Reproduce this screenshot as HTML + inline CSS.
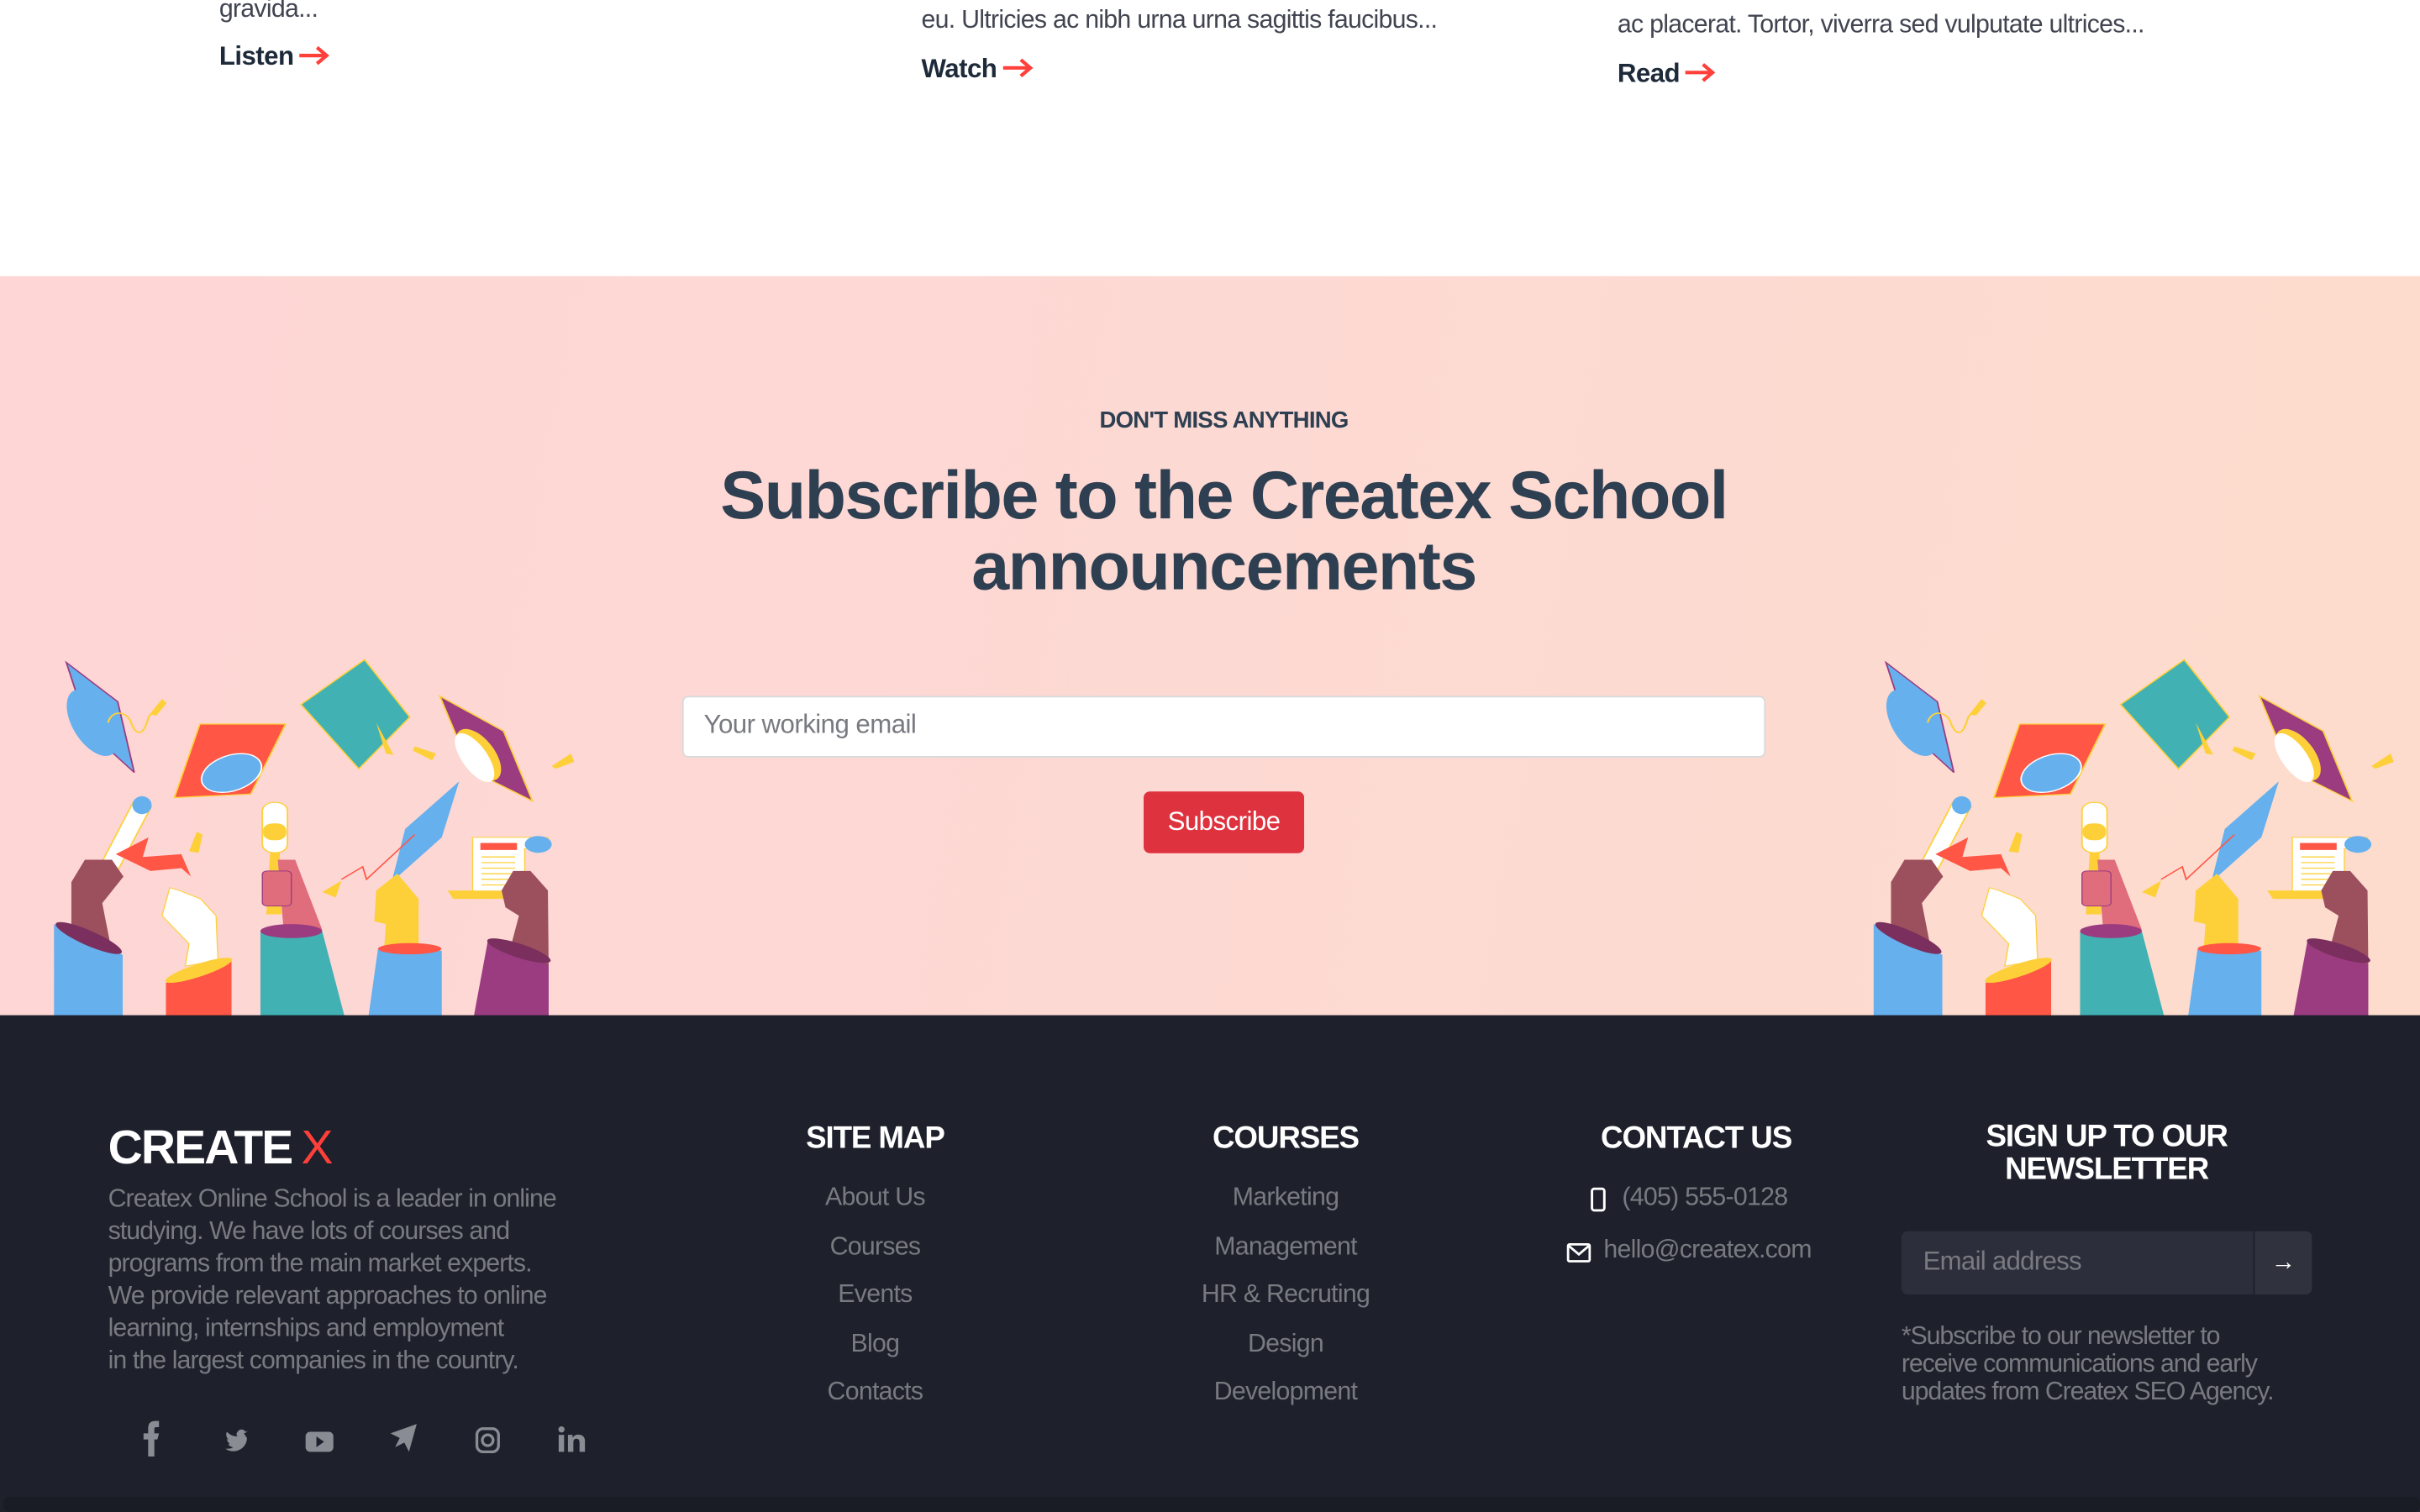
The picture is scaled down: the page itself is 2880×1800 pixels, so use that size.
<!DOCTYPE html>
<html><head><meta charset="utf-8">
<style>
html,body{margin:0;padding:0;width:2880px;height:1800px;overflow:hidden;background:#fff}
#w{position:absolute;left:0;top:0;width:1568px;height:980px;transform:scale(1.83673);transform-origin:0 0;font-family:"Liberation Sans",sans-serif;overflow:hidden}
.a{position:absolute;white-space:nowrap}
.t{color:#424551;font-size:16.5px;letter-spacing:-0.4px}
.lk{color:#1e2a3a;font-weight:bold;font-size:17px;letter-spacing:-0.3px}
.lk svg{margin-left:3px;vertical-align:-1px}
#pink{position:absolute;left:0;top:179px;width:1568px;height:480px;background:linear-gradient(100deg,#fdd6d5 0%,#fdd9d3 50%,#fddccd 100%)}
#foot{position:absolute;left:0;top:658px;width:1568px;height:322px;background:#1e212c}
.h{color:#fff;font-weight:bold;font-size:20px;letter-spacing:-0.6px;text-align:center}
.g{color:#787a80;font-size:16.5px;letter-spacing:-0.4px}
.c{transform:translateX(-50%);text-align:center}
</style></head><body><div id="w">
<svg width="0" height="0" style="position:absolute"><defs><symbol id="arr" viewBox="0 0 22 14"><path d="M1,7 H19 M13,1.5 L19.5,7 L13,12.5" fill="none" stroke="#ff3f3a" stroke-width="2.4"/></symbol></defs></svg>
<div class="a t" style="left:142px;top:-3px">gravida...</div>
<div class="a lk" style="left:142px;top:27px">Listen<svg width="21" height="14"><use href="#arr"/></svg></div>
<div class="a t" style="left:597px;top:4px">eu. Ultricies ac nibh urna urna sagittis faucibus...</div>
<div class="a lk" style="left:597px;top:35px">Watch<svg width="21" height="14"><use href="#arr"/></svg></div>
<div class="a t" style="left:1048px;top:7px">ac placerat. Tortor, viverra sed vulputate ultrices...</div>
<div class="a lk" style="left:1048px;top:38px">Read<svg width="21" height="14"><use href="#arr"/></svg></div>

<div id="pink">
<svg width="0" height="0" style="position:absolute">
<defs><symbol id="ill" viewBox="0 0 1568 1500" preserveAspectRatio="none">
<polygon points="172,85 305,225 348,478 230,330" fill="#66b0ee" stroke="#9c3b80" stroke-width="4"/>
<ellipse cx="240" cy="300" rx="55" ry="125" transform="rotate(-20 240 300)" fill="#66b0ee"/>
<path d="M280,300 C290,250 330,260 340,300 S370,360 385,280 L420,220" stroke="#fdd03a" stroke-width="5" fill="none"/>
<polygon points="390,270 420,215 432,230 405,275" fill="#fdd03a"/>
<polygon points="518,305 740,305 650,555 452,568" fill="#ff5645" stroke="#fdd03a" stroke-width="4"/>
<ellipse cx="600" cy="480" rx="85" ry="60" transform="rotate(-35 600 480)" fill="#66b0ee" stroke="#fff" stroke-width="4"/>
<polygon points="490,760 510,690 525,700 515,765" fill="#fdd03a"/>
<polygon points="780,235 945,75 1062,280 930,465" fill="#41b1b4" stroke="#fdd03a" stroke-width="4"/>
<polygon points="975,300 1020,415 1000,410" fill="#fdd03a"/>
<polygon points="1075,385 1130,410 1120,435 1070,400" fill="#fdd03a"/>
<polygon points="1140,205 1305,330 1380,580 1220,470" fill="#9b3b80" stroke="#fdd03a" stroke-width="4"/>
<ellipse cx="1240" cy="415" rx="45" ry="100" transform="rotate(-25 1240 415)" fill="#fdd03a"/>
<ellipse cx="1230" cy="425" rx="35" ry="95" transform="rotate(-25 1230 425)" fill="#fff"/>
<polygon points="1430,455 1480,410 1488,440 1440,465" fill="#fdd03a"/>
<polygon points="1050,680 1190,510 1145,710 1015,870" fill="#66b0ee"/>
<polygon points="835,905 885,865 870,925" fill="#fdd03a"/>
<path d="M885,860 L940,815 L950,860 L1075,700" stroke="#ff5645" stroke-width="4" fill="none"/>
<polygon points="345,585 392,600 240,1000 195,980" fill="#fff" stroke="#fdd03a" stroke-width="4"/>
<ellipse cx="368" cy="595" rx="25" ry="32" fill="#66b0ee"/>
<path d="M300,770 L385,710 L370,780 L470,770 L495,850 L470,820 L390,830 Z" fill="#ff5645"/>
<rect x="680" y="585" width="65" height="180" rx="30" fill="#fff" stroke="#fdd03a" stroke-width="4"/>
<rect x="682" y="660" width="60" height="60" rx="25" fill="#fdd03a"/>
<polygon points="700,765 725,765 730,985 690,985" fill="#fdd03a"/>
<path d="M1225,710 L1420,710 L1420,750 L1360,750 L1360,925 L1225,925 Z" fill="#fff" stroke="#fdd03a" stroke-width="3"/>
<ellipse cx="1395" cy="735" rx="35" ry="30" fill="#66b0ee"/>
<rect x="1245" y="730" width="95" height="25" fill="#ff5645"/>
<g stroke="#fdd03a" stroke-width="4"><line x1="1248" y1="780" x2="1335" y2="780"/><line x1="1248" y1="800" x2="1335" y2="800"/><line x1="1248" y1="820" x2="1335" y2="820"/><line x1="1248" y1="840" x2="1335" y2="840"/><line x1="1248" y1="860" x2="1335" y2="860"/><line x1="1248" y1="880" x2="1335" y2="880"/></g>
<polygon points="1160,900 1300,900 1320,930 1175,930" fill="#fdd03a"/>
<path d="M185,870 L220,790 L290,790 L320,850 L265,945 L290,1120 L185,1080 Z" fill="#9c4f5d"/>
<path d="M440,890 L465,900 L520,930 L560,990 L565,1150 L480,1170 L490,1090 L420,990 Z" fill="#fff" stroke="#fdd03a" stroke-width="3"/>
<path d="M720,790 L765,790 L835,1040 L735,1040 Z" fill="#e06d7c"/>
<rect x="680" y="830" width="75" height="125" rx="12" fill="#e06d7c" stroke="#9c3b80" stroke-width="3"/>
<path d="M975,900 L1030,840 L1085,930 L1085,1120 L995,1120 L1000,1020 L970,1010 Z" fill="#fdd03a"/>
<path d="M1300,900 L1330,830 L1375,830 L1420,900 L1422,1165 L1320,1120 L1345,990 L1310,960 Z" fill="#9c4f5d"/>
<polygon points="140,1020 318,1130 318,1350 140,1350" fill="#66b0ee"/>
<ellipse cx="230" cy="1070" rx="100" ry="25" transform="rotate(32 230 1070)" fill="#7a2f5e"/>
<polygon points="430,1230 600,1150 600,1350 430,1350" fill="#ff5645"/>
<ellipse cx="515" cy="1185" rx="95" ry="22" transform="rotate(-25 515 1185)" fill="#fdd03a"/>
<polygon points="675,1045 835,1045 893,1350 675,1350" fill="#41b1b4"/>
<ellipse cx="755" cy="1045" rx="80" ry="25" fill="#9b3b80"/>
<polygon points="980,1105 1145,1115 1145,1350 955,1350" fill="#66b0ee"/>
<ellipse cx="1062" cy="1108" rx="82" ry="20" fill="#ff5645"/>
<polygon points="1265,1075 1422,1165 1422,1350 1228,1350" fill="#9b3b80"/>
<ellipse cx="1345" cy="1115" rx="90" ry="24" transform="rotate(25 1345 1115)" fill="#7a2f5e"/>
</symbol></defs></svg>
<svg style="position:absolute;left:0;top:235px" width="392" height="272" preserveAspectRatio="none"><use href="#ill" width="392" height="272"/></svg>
<svg style="position:absolute;left:1179px;top:235px" width="392" height="272" preserveAspectRatio="none"><use href="#ill" width="392" height="272"/></svg>
<div class="a c" style="left:793px;top:85px;color:#2d3f51;font-weight:bold;font-size:15px;letter-spacing:-0.4px">DON'T MISS ANYTHING</div>
<div class="a c" style="left:793px;top:120px;color:#2d3f51;font-weight:bold;font-size:44px;line-height:46px;letter-spacing:-0.8px">Subscribe to the Createx School<br>announcements</div>
<div class="a" style="left:442px;top:272px;width:700px;height:38px;background:#fff;border:1px solid #d7dadd;border-radius:4px"></div>
<div class="a" style="left:456px;top:281px;color:#787a80;font-size:17px;letter-spacing:-0.3px">Your working email</div>
<div class="a" style="left:741px;top:334px;width:104px;height:40px;background:#df323f;border-radius:4px;color:#fff;font-size:17px;line-height:40px;text-align:center;letter-spacing:-0.3px">Subscribe</div>
</div>

<div id="foot">
<div class="a" style="left:70px;top:68px;color:#fff;font-weight:bold;font-size:31px;letter-spacing:-1px">CREATE<span style="color:#ff3f3a;font-weight:normal;margin-left:6px">X</span></div>
<div class="a g" style="left:70px;top:109px;line-height:21px;font-size:16.5px;letter-spacing:-0.5px">Createx Online School is a leader in online<br>studying. We have lots of courses and<br>programs from the main market experts.<br>We provide relevant approaches to online<br>learning, internships and employment<br>in the largest companies in the country.</div>
<svg class="a" style="left:88px;top:262px" width="300" height="26" viewBox="0 0 300 26" fill="#8a8c93">
<path d="M8,24 V13 H5 V9 H8 V6 C8,2 10,1 13,1 H15 V5 H13 C12,5 12,6 12,7 V9 H15 L14,13 H12 V24 Z"/>
<path d="M70,9 C71,9 72,8 73,7 C72,8 71,8 71,8 C70,6 67,6 66,8 C65,9 65,10 66,11 C63,11 61,10 59,8 C58,10 59,12 60,13 C60,13 59,13 59,12 C59,14 60,15 61,16 L60,16 C60,17 62,18 63,18 C62,19 60,19 58,19 C64,23 72,19 72,12 Z"/>
<rect x="110" y="8" width="18" height="13" rx="3"/><path d="M117,11 L122,14.5 L117,18 Z" fill="#1e212c"/>
<path d="M165,9 L182,3 L177,21 L174,15 L168,18 L171,12 Z"/>
<rect x="221" y="6" width="14" height="15" rx="4" fill="none" stroke="#8a8c93" stroke-width="1.8"/><circle cx="228" cy="13.5" r="3.5" fill="none" stroke="#8a8c93" stroke-width="1.8"/>
<rect x="274" y="10" width="3.5" height="11"/><circle cx="275.8" cy="6.5" r="2"/><path d="M280,10 H283 V12 C284,10 286,9.5 288,10 C290,10.5 291,12 291,14 V21 H287.5 V15 C287.5,13 286.5,12.5 285.5,12.5 C284,12.5 283.5,13.5 283.5,15 V21 H280 Z"/>
</svg>
<div class="a h c" style="left:567px;top:69px">SITE MAP</div>
<div class="a g c" style="left:567px;top:103px;line-height:31.5px">About Us<br>Courses<br>Events<br>Blog<br>Contacts</div>
<div class="a h c" style="left:833px;top:69px">COURSES</div>
<div class="a g c" style="left:833px;top:103px;line-height:31.5px">Marketing<br>Management<br>HR &amp; Recruting<br>Design<br>Development</div>
<div class="a h c" style="left:1099px;top:69px">CONTACT US</div>
<svg class="a" style="left:1030px;top:111px" width="12" height="18"><rect x="1.5" y="1.5" width="8" height="14" rx="1.5" fill="none" stroke="#fff" stroke-width="1.6"/></svg>
<div class="a g" style="left:1051px;top:109px;font-size:16.5px">(405) 555-0128</div>
<svg class="a" style="left:1015px;top:147px" width="16" height="14"><rect x="1" y="1.5" width="14" height="11" rx="1" fill="none" stroke="#fff" stroke-width="1.5"/><path d="M1.5,2.5 L8,8 L14.5,2.5" fill="none" stroke="#fff" stroke-width="1.5"/></svg>
<div class="a g" style="left:1039px;top:143px;font-size:16.5px">hello@createx.com</div>
<div class="a h c" style="left:1365px;top:69px;line-height:21px">SIGN UP TO OUR<br>NEWSLETTER</div>
<div class="a" style="left:1232px;top:140px;width:228px;height:41px;background:#2c2f3b;border-radius:4px 0 0 4px"></div>
<div class="a" style="left:1461px;top:140px;width:37px;height:41px;background:#30333e;border-radius:0 4px 4px 0;color:#fff;font-size:16px;line-height:41px;text-align:center">→</div>
<div class="a g" style="left:1246px;top:150px;font-size:17px">Email address</div>
<div class="a g" style="left:1232px;top:199px;line-height:18px;font-size:16.5px;letter-spacing:-0.6px">*Subscribe to our newsletter to<br>receive communications and early<br>updates from Createx SEO Agency.</div>
<div class="a" style="left:2px;top:312px;width:1566px;height:10px;background:#1a1c25;border-radius:4px"></div>
</div>
</div></body></html>
